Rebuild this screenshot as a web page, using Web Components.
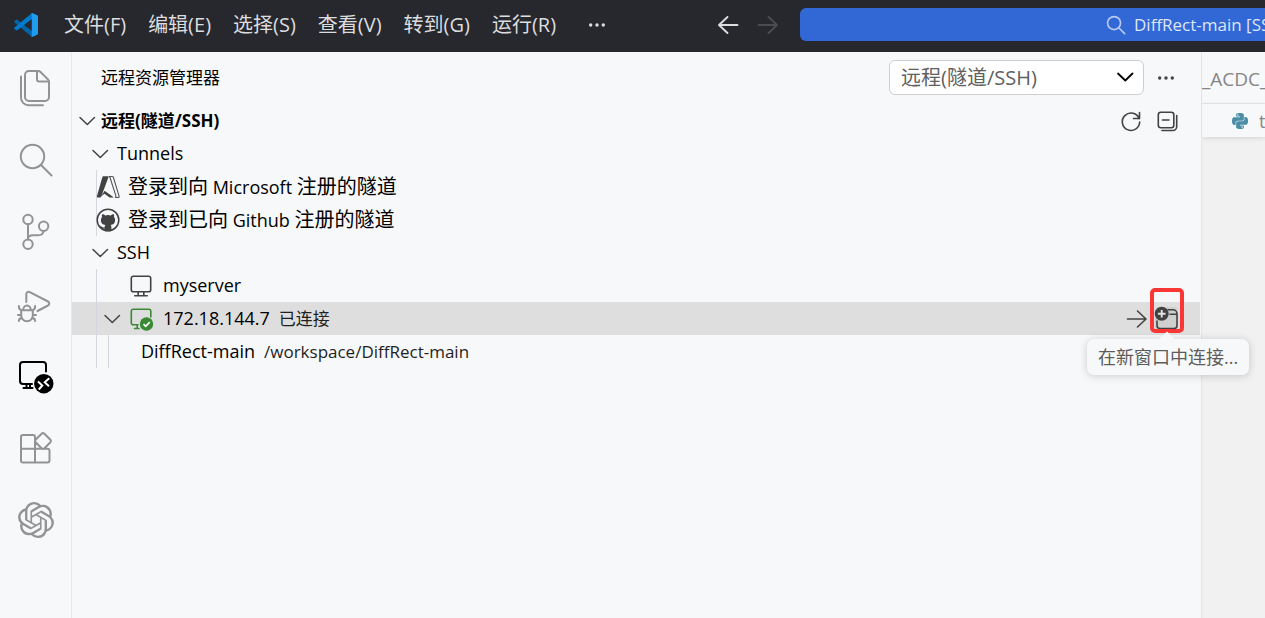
<!DOCTYPE html>
<html lang="zh-CN">
<head>
<meta charset="utf-8">
<title>DiffRect-main</title>
<style>
  html, body { height: 100%; margin: 0; }
  body {
    font-family: "Open Sans", "Noto Sans CJK SC", sans-serif;
    font-size: 18px;
    color: #000;
    background: #f7f8fa;
    overflow: hidden;
  }
</style>
</head>
<body>
<work-bench></work-bench>
<script>
const ICONS = {
  logo: [24, '<path fill="#0065a9" d="M.4 8.2 2 6.8q.6-.5 1.2 0L18 18v6L.5 9.4q-.7-.6-.1-1.2z"/><path fill="#007acc" d="M.4 15.8 2 17.2q.6.5 1.2 0L18 6V0L.5 14.6q-.7.6-.1 1.2z"/><path fill="#1f9cf0" d="m18.2 0 5 2.3q.8.4.8 1.3v16.8q0 .9-.8 1.3l-5 2.3q-.9.3-1.5-.4.9.5 1.1-.5V1q-.2-1.100-1.100-.6.6-.7 1.5-.4z"/>'],
  files: [36, '<g class="s"><path d="M20 1h-9a4 4 0 0 0-4 4v22a4 4 0 0 0 4 4h16a4 4 0 0 0 4-4V12q0-1.5-1-2.5L22.5 2Q21.5 1 20 1z"/><path d="M19 1.5V9.5a2 2 0 0 0 2 2h10M3 6.5V28a7.5 7.5 0 0 0 7.5 7.2H25"/></g>'],
  search: [36, '<g class="s"><circle cx="14.5" cy="14.5" r="11.7"/><path d="m23 23 10.5 10.5"/></g>'],
  scm: [36, '<g class="s"><circle cx="10" cy="5.5" r="4.7"/><circle cx="25.6" cy="12.2" r="4.7"/><circle cx="10" cy="30.3" r="4.7"/><path d="M10 10.2v15.4M25.6 17c-.3 2.8-2.6 4.3-5.6 4.3h-5c-3 0-5 1.3-5 3.7"/></g>'],
  debug: [36, '<g class="s"><path d="M8.3 16V8.3c0-2 1.8-3 3.5-2.2L30 15.5c1.7.9 1.7 3 0 4L19.5 25M3.2 24.2h11.6v5.3a5.8 5.8 0 0 1-11.6 0zM5.2 24a3.8 4.5 0 0 1 7.6 0M.9 20v.5a3.5 3.5 0 0 0 2.6 3.6M17.1 20v.5a3.5 3.5 0 0 1-2.6 3.6M0 29h3M18 29h-3M.9 35v-.5q.2-2.2 3-2.7M17.1 35v-.5q-.2-2.2-3-2.7"/></g>'],
  remote: [36, '<g class="s"><path d="M28 13.5V7a3 3 0 0 0-3-3H5a3 3 0 0 0-3 3v16a3 3 0 0 0 3 3h9M5.500 30h9M8.5 26v4M12 26v4"/></g><circle cx="25.8" cy="25.7" r="9.7" fill="currentColor"/><path d="m20 23.500 4.300 4-3.500 4M31.300 20.300l-4.600 3.900 4.300 4" fill="none" stroke="#fff" stroke-width="2"/>'],
  ext: [36, '<g class="s"><path d="M17 18.700V7a2 2 0 0 0-2-2H5a2 2 0 0 0-2 2v23.500a2 2 0 0 0 2 2h24.500a2 2 0 0 0 2-2V20.700a2 2 0 0 0-2-2zM3 18.700h14v13.800M23.600 3.700l-6 6q-1.200 1.300 0 2.600l6 6q1.400 1.200 2.800 0l6-6q1.200-1.300 0-2.600l-6-6q-1.400-1.200-2.800 0z"/></g>'],
  ai: [24, '<path fill="currentColor" d="M22.2819 9.8211a5.9847 5.9847 0 0 0-.5157-4.9108 6.0462 6.0462 0 0 0-6.5098-2.9A6.0651 6.0651 0 0 0 4.9807 4.1818a5.9847 5.9847 0 0 0-3.9977 2.9 6.0462 6.0462 0 0 0 .7427 7.0966 5.98 5.98 0 0 0 .511 4.9107 6.051 6.051 0 0 0 6.5146 2.9001A5.9847 5.9847 0 0 0 13.2599 24a6.0557 6.0557 0 0 0 5.7718-4.2058 5.9894 5.9894 0 0 0 3.9977-2.9001 6.0557 6.0557 0 0 0-.7475-7.0729zm-9.022 12.6081a4.4755 4.4755 0 0 1-2.8764-1.0408l.1419-.0804 4.7783-2.7582a.7948.7948 0 0 0 .3927-.6813v-6.7369l2.02 1.1686a.071.071 0 0 1 .038.052v5.5826a4.504 4.504 0 0 1-4.4945 4.4944zm-9.6607-4.1254a4.4708 4.4708 0 0 1-.5346-3.0137l.142.0852 4.783 2.7582a.7712.7712 0 0 0 .7806 0l5.8428-3.3685v2.3324a.0804.0804 0 0 1-.0332.0615L9.74 19.9502a4.4992 4.4992 0 0 1-6.1408-1.6464zM2.3408 7.8956a4.485 4.485 0 0 1 2.3655-1.9728V11.6a.7664.7664 0 0 0 .3879.6765l5.8144 3.3543-2.0201 1.1685a.0757.0757 0 0 1-.071 0l-4.8303-2.7865A4.504 4.504 0 0 1 2.3408 7.872zm16.5963 3.8558L13.1038 8.364 15.1192 7.2a.0757.0757 0 0 1 .071 0l4.8303 2.7913a4.4944 4.4944 0 0 1-.6765 8.1042v-5.6772a.79.79 0 0 0-.407-.667zm2.0107-3.0231l-.142-.0852-4.7735-2.7818a.7759.7759 0 0 0-.7854 0L9.409 9.2297V6.8974a.0662.0662 0 0 1 .0284-.0615l4.8303-2.7866a4.4992 4.4992 0 0 1 6.6802 4.66zM8.3065 12.863l-2.02-1.1638a.0804.0804 0 0 1-.038-.0567V6.0742a4.4992 4.4992 0 0 1 7.3757-3.4537l-.142.0805L8.704 5.459a.7948.7948 0 0 0-.3927.6813zm1.0976-2.3654l2.602-1.4998 2.6069 1.4998v2.9994l-2.5974 1.4997-2.6067-1.4997Z"/>'],
  back: [24, '<path class="s" d="M21.500 12H3M11.500 4 3 12l8.500 8"/>'],
  forward: [24, '<path class="s" d="M2.500 12h18M12.500 4l8.500 8-8.500 8"/>'],
  more: [24, '<g fill="currentColor"><circle cx="5.7" cy="12" r="1.7"/><circle cx="12" cy="12" r="1.7"/><circle cx="18.3" cy="12" r="1.7"/></g>'],
  chevron: [24, '<path class="s" d="m5 8.500 7.300 7 7.200-7"/>'],
  refresh: [24, '<path class="s" d="M20.200 9.800A8.700 8.700 0 1 0 20.700 13M20.500 3.500v6h-6"/>'],
  collapse: [24, '<g class="s"><rect x="2.300" y="3.200" width="15.500" height="15.500" rx="2.500"/><path d="M6.500 11H13M20.700 6.500v11a4 4 0 0 1-4 4H6"/></g>'],
  azure: [24, '<path fill="#424242" d="M7.200 1.300h5.600L5.300 21.500q-.3 1-1.200 1H1.700Q.5 22.500.9 21.200L6.400 2q.2-.7.800-.7zM8.600 15.800l9 6.500q-.5.200-1.600.2h-2.500l-5-3.800-3.200 2.500z"/><path d="M13 1.500h3.200q.9 0 1.200.8l5.700 19q.4 1.200-.9 1.200h-3q1-.5.7-1.600L14 2.500q-.3-.8-1-1z" fill="none" stroke="#555" stroke-width="1.100"/>'],
  github: [24, '<circle cx="12" cy="12" r="10.800" fill="none" stroke="#424242" stroke-width="1.500"/><path fill="#424242" d="M6.100 6.300c1.100-.2 2.300.5 3.100 1.100a11 11 0 0 1 5.600 0c.8-.6 2-1.300 3.100-1.100.4 1 .4 2 .1 2.800.8.900 1.100 1.800 1.100 2.900 0 3.500-2 4.600-4.500 5 .6.500.8 1.200.8 2v3.700a11 11 0 0 1-6.800 0v-2c-3 .5-3.500-1.200-4.200-2.300l-.7-.7c1.800-.4 2.200 2.200 4.900 1.700 0-1 .2-1.800.8-2.400-2.500-.4-4.500-1.500-4.500-5 0-1.100.4-2 1.100-2.900-.3-.8-.3-1.800.1-2.800z"/>'],
  monitor: [24, '<path class="s" d="M4.300 2.200h15.400a2 2 0 0 1 2 2v11.600a2 2 0 0 1-2 2H4.300a2 2 0 0 1-2-2V4.200a2 2 0 0 1 2-2zM9.200 18v3.500M14.800 18v3.500M5.800 21.700h12.400"/>'],
  connected: [24, '<g class="s"><path d="M21.800 10V4.200a2 2 0 0 0-2-2H4.300a2 2 0 0 0-2 2v11.600a2 2 0 0 0 2 2H9M5.500 21.500H10M8.200 18v3.500"/></g><circle cx="17.500" cy="17" r="6.700" fill="currentColor"/><path d="m14.500 17.200 2.200 2.200 4-4.200" fill="none" stroke="#fff" stroke-width="1.700"/>'],
  window: [24, '<rect x="0" y="0" width="23" height="24" rx="4" fill="#cfcfcf"/><path class="s" d="M13 2.800h5a4 4 0 0 1 4 4v11.700a3 3 0 0 1-3 3H5a3 3 0 0 1-3-3V14M15 7.200h7"/><circle cx="6.700" cy="6.800" r="7" fill="currentColor"/><path d="M6.700 3v7.600M2.900 6.800h7.600" stroke="#e4e4e4" stroke-width="1.900"/>'],
  python: [24, '<path fill="#4b8ea6" d="M14.25.18l.9.2.73.26.59.3.45.32.34.34.25.34.16.33.1.3.04.26.02.2-.01.13V8.5l-.05.63-.13.55-.21.46-.26.38-.3.31-.33.25-.35.19-.35.14-.33.1-.3.07-.26.04-.21.02H8.77l-.69.05-.59.14-.5.22-.41.27-.33.32-.27.35-.2.36-.15.37-.1.35-.07.32-.04.27-.02.21v3.06H3.17l-.21-.03-.28-.07-.32-.12-.35-.18-.36-.26-.36-.36-.35-.46-.32-.59-.28-.73-.21-.88-.14-1.05-.05-1.23.06-1.22.16-1.04.24-.87.32-.71.36-.57.4-.44.42-.33.42-.24.4-.16.36-.1.32-.05.24-.01h.16l.06.01h8.16v-.83H6.18l-.01-2.75-.02-.37.05-.34.11-.31.17-.28.25-.26.31-.23.38-.2.44-.18.51-.15.58-.12.64-.1.71-.06.77-.04.84-.02 1.27.05zm-6.3 1.98l-.23.33-.08.41.08.41.23.34.33.22.41.09.41-.09.33-.22.23-.34.08-.41-.08-.41-.23-.33-.33-.22-.41-.09-.41.09zm13.09 3.95l.28.06.32.12.35.18.36.27.36.35.35.47.32.59.28.73.21.88.14 1.04.05 1.23-.06 1.23-.16 1.04-.24.86-.32.71-.36.57-.4.45-.42.33-.42.24-.4.16-.36.09-.32.05-.24.02-.16-.01h-8.22v.82h5.84l.01 2.76.02.36-.05.34-.11.31-.17.29-.25.25-.31.24-.38.2-.44.17-.51.15-.58.13-.64.09-.71.07-.77.04-.84.01-1.27-.04-1.07-.14-.9-.2-.73-.25-.59-.3-.45-.33-.34-.34-.25-.34-.16-.33-.1-.3-.04-.25-.02-.2.01-.13v-5.34l.05-.64.13-.54.21-.46.26-.38.3-.32.33-.24.35-.2.35-.14.33-.1.3-.06.26-.04.21-.02.13-.01h5.84l.69-.05.59-.14.5-.21.41-.28.33-.32.27-.35.2-.36.15-.36.1-.35.07-.32.04-.28.02-.21V6.07h2.09l.14.01zm-6.47 14.25l-.23.33-.08.41.08.41.23.33.33.23.41.08.41-.08.33-.23.23-.33.08-.41-.08-.41-.23-.33-.33-.23-.41-.08-.41.08z"/>']
};

function define(name, html, setup) {
  const template = document.createElement('template');
  template.innerHTML = html;
  customElements.define(name, class extends HTMLElement {
    constructor() {
      super();
      this.attachShadow({ mode: 'open' }).append(template.content.cloneNode(true));
    }
    connectedCallback() { if (setup) setup(this); }
  });
}

define('ui-icon', `<style>
  :host { display: block; flex: none; width: 24px; height: 24px; }
  svg { display: block; width: 100%; height: 100%; overflow: visible; }
  .s { fill: none; stroke: currentColor; stroke-width: var(--stroke, 1.6); stroke-linecap: round; stroke-linejoin: round; }
</style><svg aria-hidden="true"></svg>`, el => {
  const [size, markup] = ICONS[el.getAttribute('name')];
  const svg = el.shadowRoot.querySelector('svg');
  svg.setAttribute('viewBox', `0 0 ${size} ${size}`);
  svg.innerHTML = markup;
});

define('icon-button', `<style>
  :host { display: block; flex: none; width: 24px; height: 24px; }
  button { display: block; width: 100%; height: 100%; padding: 0; border: 0; background: none; color: inherit; font: inherit; }
</style><button type="button"><slot></slot></button>`, el => {
  el.shadowRoot.querySelector('button').setAttribute('aria-label', el.getAttribute('label'));
});

define('menu-item', `<style>
  :host { display: block; flex: none; }
  button { display: block; padding: 0 11px; border: 0; background: none; color: inherit; font: inherit; font-size: 20px; line-height: 32px; white-space: nowrap; }
</style><button type="button"><slot></slot></button>`);

define('title-bar', `<style>
  :host { display: flex; align-items: center; box-sizing: border-box; height: 52px; padding-bottom: 2px; background: #27282e; color: #dcdddf; overflow: hidden; }
  .logo { margin: 0 15px 0 14px; }
  nav { display: flex; flex: none; width: 515px; }
  .more { margin-left: 17px; }
  .history { display: flex; gap: 16px; margin: 0 20px 0 auto; --stroke: 1.9; }
  .off { color: #4b4c51; }
  .command {
    display: flex; align-items: center; gap: 8px; flex: 0 0 465px; box-sizing: border-box; height: 33px; margin-bottom: 1px;
    padding: 0 0 0 306px; border: 0; border-radius: 6px 0 0 6px;
    background: #3267d6; color: #dfe6f7; font: inherit; font-size: 17px; white-space: nowrap; overflow: hidden;
  }
  .command ui-icon { width: 20px; height: 20px; --stroke: 3; color: #b9caf1; }
</style>
<ui-icon class="logo" name="logo"></ui-icon>
<nav>
  <menu-item>文件(F)</menu-item><menu-item>编辑(E)</menu-item><menu-item>选择(S)</menu-item><menu-item>查看(V)</menu-item><menu-item>转到(G)</menu-item><menu-item>运行(R)</menu-item>
</nav>
<icon-button class="more" label="更多"><ui-icon name="more"></ui-icon></icon-button>
<div class="history">
  <icon-button label="后退"><ui-icon name="back"></ui-icon></icon-button>
  <icon-button class="off" label="前进"><ui-icon name="forward"></ui-icon></icon-button>
</div>
<button class="command" type="button"><ui-icon name="search"></ui-icon><span>DiffRect-main [SS</span></button>`);

define('activity-bar', `<style>
  :host { display: flex; flex-direction: column; flex: 0 0 71px; border-right: 1px solid #e8e9ec; color: #929394; --stroke: 2; }
  icon-button { width: 71px; height: 72px; }
  ui-icon { width: 36px; height: 36px; margin: 0 auto; }
  .on { color: #000; }
</style>
<icon-button label="资源管理器"><ui-icon name="files"></ui-icon></icon-button>
<icon-button label="搜索"><ui-icon name="search"></ui-icon></icon-button>
<icon-button label="源代码管理"><ui-icon name="scm"></ui-icon></icon-button>
<icon-button label="运行和调试"><ui-icon name="debug"></ui-icon></icon-button>
<icon-button class="on" label="远程资源管理器"><ui-icon name="remote"></ui-icon></icon-button>
<icon-button label="扩展"><ui-icon name="ext"></ui-icon></icon-button>
<icon-button label="ChatGPT"><ui-icon name="ai"></ui-icon></icon-button>`);

define('tree-row', `<style>
  :host { display: flex; align-items: center; height: 33px; line-height: 33px; white-space: nowrap; color: #000; }
  :host([kind="group"]) { padding-left: 16px; }
  :host([kind="account"]) { padding-left: 24px; font-size: 20px; }
  :host([kind="host"]) { padding-left: 57px; }
  :host([kind="open-host"]) { padding-left: 28px; background-color: #dedede; }
  :host([kind="folder"]) { padding-left: 69px; }
  :host(:not([kind="group"])) {
    background-image: linear-gradient(#d5d6de, #d5d6de);
    background-size: 1px 100%; background-position: 24px 0; background-repeat: no-repeat;
  }
  :host([kind="folder"]) {
    background-image: linear-gradient(#d5d6de, #d5d6de), linear-gradient(#d5d6de, #d5d6de);
    background-position: 24px 0, 36px 0;
  }
  ::slotted([slot="twistie"]) { margin-right: 5px; color: #424242; --stroke: 1.5; }
  ::slotted([slot="icon"]) { margin-right: 10px; color: #424242; }
  :host([kind="account"]) ::slotted([slot="icon"]) { margin-right: 8px; }
  :host([kind="open-host"]) ::slotted([slot="icon"]) { color: #388a34; }
  ::slotted(.latin) { font-size: 18px; }
  ::slotted([slot="note"]) { margin-left: 9px; font-size: 17px; color: #1f1f1f; }
  ::slotted([slot="actions"]) { margin-left: auto; }
</style>
<slot name="twistie"></slot><slot name="icon"></slot><span><slot></slot></span><slot name="note"></slot><slot name="actions"></slot>`);

define('row-actions', `<style>
  :host { display: flex; align-items: center; gap: 6px; margin-right: 21px; color: #424242; }
  .target { position: relative; }
  .mark { position: absolute; left: -5px; top: -19px; width: 26px; height: 37px; border: 4px solid #fc3535; border-radius: 5px; }
  .tip {
    position: absolute; z-index: 2; left: -68px; top: 32px; padding: 0 11px; border-radius: 7px;
    background: #f7f8fa; color: #5c5c5c; font-size: 18px; line-height: 36px; white-space: nowrap;
    box-shadow: 0 1px 8px rgba(0, 0, 0, .18);
  }
  .tip::before {
    content: ""; position: absolute; left: 74px; top: -5px; width: 12px; height: 12px;
    background: #f7f8fa; transform: rotate(45deg);
  }
</style>
<icon-button label="在当前窗口中连接"><ui-icon name="forward"></ui-icon></icon-button>
<div class="target">
  <icon-button label="在新窗口中连接"><ui-icon name="window"></ui-icon></icon-button>
  <div class="mark"></div>
  <div class="tip" role="tooltip">在新窗口中连接...</div>
</div>`);

define('remote-panel', `<style>
  :host { display: block; flex: 1; min-width: 0; position: relative; z-index: 1; }
  header { display: flex; align-items: center; box-sizing: border-box; height: 52px; padding: 0 23px 1px 29px; }
  h1, h2 { margin: 0; font-size: 17px; line-height: 33px; white-space: nowrap; }
  h1 { font-weight: 400; }
  .pick { position: relative; width: 255px; margin: 0 10px 0 auto; color: #000; }
  select {
    display: block; box-sizing: border-box; width: 100%; height: 35px; padding: 0 36px 0 11px; appearance: none;
    border: 1px solid #cdced1; border-radius: 6px; background: #fff; color: #606060; font: inherit; font-size: 20px;
  }
  .pick ui-icon { position: absolute; right: 7px; top: 5px; pointer-events: none; --stroke: 1.8; }
  .section { display: flex; align-items: center; height: 33px; padding: 0 21px 0 3px; }
  .section > ui-icon { margin-right: 2px; --stroke: 1.5; color: #424242; }
  .tools { display: flex; gap: 13px; margin-left: auto; color: #424242; }
  header icon-button { color: #424242; }
  tree-row[kind="open-host"] { margin-right: 1px; }
</style>
<header>
  <h1>远程资源管理器</h1>
  <div class="pick">
    <select aria-label="远程类型"><option>远程(隧道/SSH)</option></select>
    <ui-icon name="chevron"></ui-icon>
  </div>
  <icon-button label="更多操作"><ui-icon name="more"></ui-icon></icon-button>
</header>
<div class="section">
  <ui-icon name="chevron"></ui-icon>
  <h2>远程(隧道/SSH)</h2>
  <div class="tools">
    <icon-button label="刷新"><ui-icon name="refresh"></ui-icon></icon-button>
    <icon-button label="全部折叠"><ui-icon name="collapse"></ui-icon></icon-button>
  </div>
</div>
<div role="tree" aria-label="远程">
  <tree-row role="treeitem" kind="group"><ui-icon slot="twistie" name="chevron"></ui-icon>Tunnels</tree-row>
  <tree-row role="treeitem" kind="account"><ui-icon slot="icon" name="azure"></ui-icon>登录到向<span class="latin"> Microsoft </span>注册的隧道</tree-row>
  <tree-row role="treeitem" kind="account"><ui-icon slot="icon" name="github"></ui-icon>登录到已向<span class="latin"> Github </span>注册的隧道</tree-row>
  <tree-row role="treeitem" kind="group"><ui-icon slot="twistie" name="chevron"></ui-icon>SSH</tree-row>
  <tree-row role="treeitem" kind="host"><ui-icon slot="icon" name="monitor"></ui-icon>myserver</tree-row>
  <tree-row role="treeitem" kind="open-host"><ui-icon slot="twistie" name="chevron"></ui-icon><ui-icon slot="icon" name="connected"></ui-icon>172.18.144.7<span slot="note">已连接</span><row-actions slot="actions"></row-actions></tree-row>
  <tree-row role="treeitem" kind="folder">DiffRect-main<span slot="note">/workspace/DiffRect-main</span></tree-row>
</div>`);

define('editor-group', `<style>
  :host { display: block; flex: 0 0 63px; border-left: 1px solid #e3e4e7; background: #f1f1f1; color: #868686; overflow: hidden; white-space: nowrap; }
  .tab { height: 51px; font-size: 19px; line-height: 54px; border-bottom: 1px solid #e8e9ec; background: #f7f8fa; }
  .crumbs { display: flex; align-items: center; gap: 11px; height: 33px; padding-left: 30px; background: #f7f8fa; box-shadow: 0 1px 5px rgba(0, 0, 0, .13); }
  ui-icon { width: 16px; height: 16px; }
</style>
<div class="tab">_ACDC_</div>
<div class="crumbs"><ui-icon name="python"></ui-icon><span>t</span></div>`);

define('work-bench', `<style>
  :host { display: flex; flex-direction: column; height: 100%; overflow: hidden; }
  main { display: flex; flex: 1; min-height: 0; }
</style>
<title-bar></title-bar>
<main><activity-bar></activity-bar><remote-panel></remote-panel><editor-group></editor-group></main>`);
</script>
</body>
</html>
